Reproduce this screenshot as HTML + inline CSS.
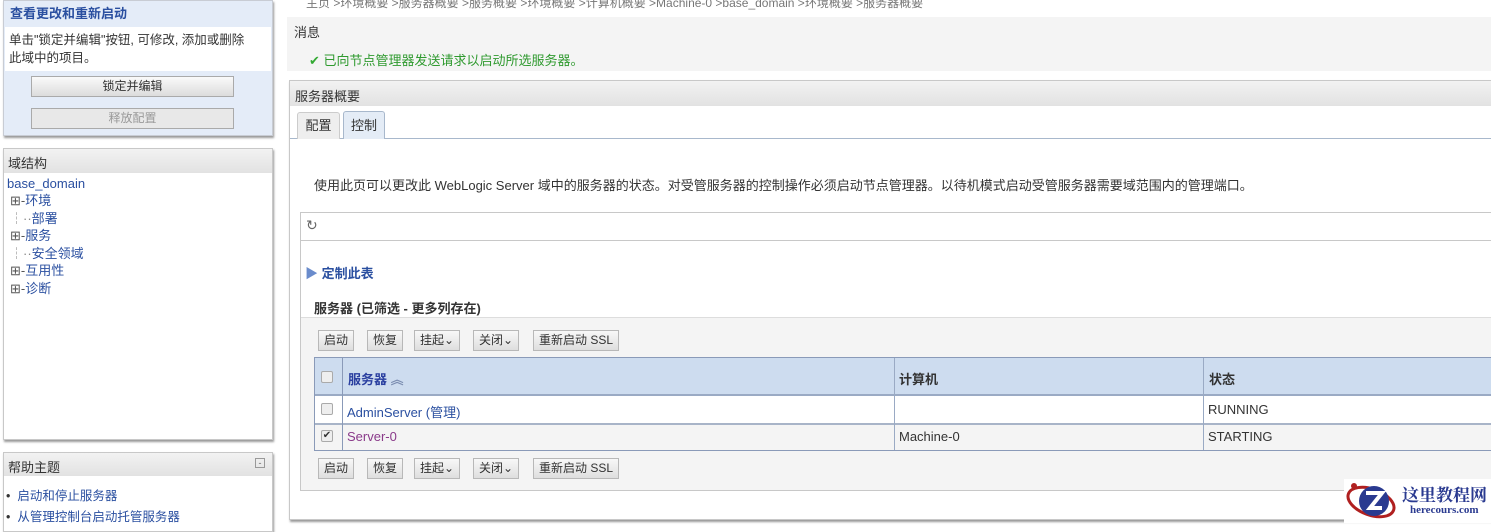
<!DOCTYPE html>
<html><head><meta charset="utf-8"><style>
*{margin:0;padding:0;box-sizing:border-box}
body{width:1491px;height:523px;overflow:hidden;background:#fff;font-family:"Liberation Sans","Noto Sans CJK SC",sans-serif;font-size:12px;color:#333;position:relative}
.a{position:absolute}
.btn{position:absolute;height:21px;border:1px solid #aaa;background:linear-gradient(#fafafa,#dcdcdc);text-align:center;line-height:19px;font-size:12px;color:#333}
.sb{position:absolute;height:21px;border:1px solid #b8b8b8;background:linear-gradient(#f8f8f8,#dedede);line-height:19px;padding:0 5px;font-size:12px;color:#333}
.lk{color:#2a4fa0}
.cb{position:absolute;width:12px;height:12px;border:1px solid #aaa;background:#eee;border-radius:2px}
</style></head><body>
<div class="a" style="left:3px;top:0;width:270px;height:136px;background:#e4ecf8;border:1px solid #c8ccd4;box-shadow:1px 2px 2px #999"></div>
<div class="a" style="left:10px;top:3px;font-size:13px;font-weight:bold;color:#2a4fa0">查看更改和重新启动</div>
<div class="a" style="left:5px;top:27px;width:266px;height:44px;background:#fff"></div>
<div class="a" style="left:9px;top:31px;line-height:18px;width:265px;font-size:12.5px;white-space:nowrap">单击"锁定并编辑"按钮, 可修改, 添加或删除<br>此域中的项目。</div>
<div class="btn" style="left:31px;top:76px;width:203px">锁定并编辑</div>
<div class="btn" style="left:31px;top:108px;width:203px;color:#999;background:#e8e8e8">释放配置</div>
<div class="a" style="left:3px;top:148px;width:270px;height:292px;border:1px solid #c8c8c8;box-shadow:1px 2px 2px #999;background:#fff"></div>
<div class="a" style="left:4px;top:149px;width:268px;height:24px;background:linear-gradient(#f2f2f2,#e2e2e2)"></div>
<div class="a" style="left:8px;top:153px;font-size:13px">域结构</div>
<div class="a lk" style="left:7px;top:176px;font-size:13px">base_domain</div>
<div class="a" style="left:10px;top:192px;line-height:17.6px;font-size:13px" >
<div><span style="color:#555">⊞-</span><span class="lk">环境</span></div>
<div><span style="color:#888">┆··</span><span class="lk">部署</span></div>
<div><span style="color:#555">⊞-</span><span class="lk">服务</span></div>
<div><span style="color:#888">┆··</span><span class="lk">安全领域</span></div>
<div><span style="color:#555">⊞-</span><span class="lk">互用性</span></div>
<div><span style="color:#555">⊞-</span><span class="lk">诊断</span></div>
</div>
<div class="a" style="left:3px;top:452px;width:270px;height:80px;border:1px solid #c8c8c8;box-shadow:1px 2px 2px #999;background:#fff"></div>
<div class="a" style="left:4px;top:453px;width:268px;height:23px;background:linear-gradient(#f2f2f2,#e2e2e2)"></div>
<div class="a" style="left:8px;top:457px;font-size:13px">帮助主题</div>
<div class="a" style="left:255px;top:458px;width:10px;height:10px;border:1px solid #999;font-size:9px;line-height:8px;text-align:center;color:#666">-</div>
<div class="a" style="left:6px;top:486px;line-height:21px;font-size:12.5px"><div>•&nbsp;&nbsp;<span class="lk">启动和停止服务器</span></div><div>•&nbsp;&nbsp;<span class="lk">从管理控制台启动托管服务器</span></div></div>
<div class="a" style="left:306px;top:-6px;color:#777;font-size:12px;white-space:nowrap">主页 &gt;环境概要 &gt;服务器概要 &gt;服务概要 &gt;环境概要 &gt;计算机概要 &gt;Machine-0 &gt;base_domain &gt;环境概要 &gt;服务器概要</div>
<div class="a" style="left:287px;top:17px;width:1204px;height:54px;background:#f4f4f4"></div>
<div class="a" style="left:294px;top:22px;font-size:13px">消息</div>
<div class="a" style="left:309px;top:50px;font-size:13px;color:#2f9a2f"><span style="color:#3a3">✔</span> 已向节点管理器发送请求以启动所选服务器。</div>
<div class="a" style="left:289px;top:80px;width:1210px;height:440px;border:1px solid #c8c8c8;box-shadow:1px 2px 2px #999;background:#fff"></div>
<div class="a" style="left:290px;top:81px;width:1201px;height:25px;background:linear-gradient(#f2f2f2,#e2e2e2)"></div>
<div class="a" style="left:295px;top:86px;font-size:13px">服务器概要</div>
<div class="a" style="left:290px;top:138px;width:1201px;border-top:1px solid #a8b8cc"></div>
<div class="a" style="left:297px;top:112px;width:43px;height:27px;border:1px solid #ccc;border-bottom:none;background:#eee;border-radius:3px 3px 0 0;text-align:center;line-height:26px;font-size:13px">配置</div>
<div class="a" style="left:343px;top:111px;width:42px;height:28px;border:1px solid #a8b8cc;border-bottom:none;background:#e4ecf6;border-radius:3px 3px 0 0;text-align:center;line-height:28px;font-size:13px">控制</div>
<div class="a" style="left:314px;top:175px;font-size:13px;white-space:nowrap">使用此页可以更改此 WebLogic Server 域中的服务器的状态。对受管服务器的控制操作必须启动节点管理器。以待机模式启动受管服务器需要域范围内的管理端口。</div>
<div class="a" style="left:300px;top:212px;width:1200px;height:279px;border:1px solid #c8c8c8"></div>
<div class="a" style="left:301px;top:240px;width:1200px;border-top:1px solid #c8c8c8"></div>
<div class="a" style="left:306px;top:217px;font-size:14px;color:#666">↻</div>
<div class="a" style="left:301px;top:317px;width:1190px;height:173px;background:#f4f4f4;border-top:1px solid #ddd"></div>
<div class="a" style="left:305px;top:263px;font-size:13px;font-weight:bold;color:#2a4fa0"><span style="color:#6a8ccc">▶</span> 定制此表</div>
<div class="a" style="left:314px;top:298px;font-size:13px;font-weight:bold;color:#333">服务器 (已筛选 - 更多列存在)</div>
<div class="sb" style="left:318px;top:330px">启动</div>
<div class="sb" style="left:367px;top:330px">恢复</div>
<div class="sb" style="left:414px;top:330px">挂起⌄</div>
<div class="sb" style="left:473px;top:330px">关闭⌄</div>
<div class="sb" style="left:533px;top:330px">重新启动 SSL</div>
<div class="a" style="left:314px;top:357px;width:1177px;height:94px;border:1px solid #8a9ab8;border-right:none;background:#fff"></div>
<div class="a" style="left:315px;top:358px;width:1176px;height:38px;background:#cddcef;border-bottom:2px solid #9aaac4"></div>
<div class="a" style="left:315px;top:423px;width:1176px;height:27px;background:#f4f4f4;border-top:2px solid #a8b4c8"></div>
<div class="a" style="left:342px;top:358px;height:92px;border-left:1px solid #8a9ab8"></div>
<div class="a" style="left:894px;top:358px;height:92px;border-left:1px solid #9aaac4"></div>
<div class="a" style="left:1203px;top:358px;height:92px;border-left:1px solid #9aaac4"></div>
<div class="cb" style="left:321px;top:371px"></div>
<div class="cb" style="left:321px;top:403px"></div>
<div class="cb" style="left:321px;top:430px;font-size:10px;line-height:10px;text-align:center;color:#333">✔</div>
<div class="a" style="left:348px;top:369px;font-size:13px;font-weight:bold;color:#2a3fa0">服务器 <span style="color:#7a8cb0">︽</span></div>
<div class="a" style="left:899px;top:369px;font-size:13px;font-weight:bold;color:#333">计算机</div>
<div class="a" style="left:1209px;top:369px;font-size:13px;font-weight:bold;color:#333">状态</div>
<div class="a" style="left:347px;top:402px;font-size:13px;color:#2a4fa0">AdminServer (管理)</div>
<div class="a" style="left:1208px;top:402px;font-size:13px">RUNNING</div>
<div class="a" style="left:347px;top:429px;font-size:13px;color:#8a3a8a">Server-0</div>
<div class="a" style="left:899px;top:429px;font-size:13px">Machine-0</div>
<div class="a" style="left:1208px;top:429px;font-size:13px">STARTING</div>
<div class="sb" style="left:318px;top:458px">启动</div>
<div class="sb" style="left:367px;top:458px">恢复</div>
<div class="sb" style="left:414px;top:458px">挂起⌄</div>
<div class="sb" style="left:473px;top:458px">关闭⌄</div>
<div class="sb" style="left:533px;top:458px">重新启动 SSL</div>
<div class="a" style="left:1344px;top:479px;width:147px;height:44px;background:#fff"></div>
<svg class="a" style="left:1344px;top:479px" width="56" height="44" viewBox="0 0 56 44"><ellipse cx="27" cy="23" rx="24" ry="13" fill="none" stroke="#b02020" stroke-width="3" transform="rotate(20 27 23)"/><circle cx="30" cy="22" r="15" fill="#2a3a90"/><path d="M22 14h16l-12 15h12" stroke="#fff" stroke-width="4" fill="none"/><circle cx="10" cy="7" r="3" fill="#b02020"/></svg>
<div class="a" style="left:1402px;top:481px;font-size:17px;font-weight:bold;color:#2a3a90;font-family:'Noto Serif CJK SC',serif">这里教程网</div>
<div class="a" style="left:1410px;top:504px;font-size:11px;font-weight:bold;color:#2a3a90;font-family:'Liberation Serif',serif">herecours.com</div>
</body></html>
